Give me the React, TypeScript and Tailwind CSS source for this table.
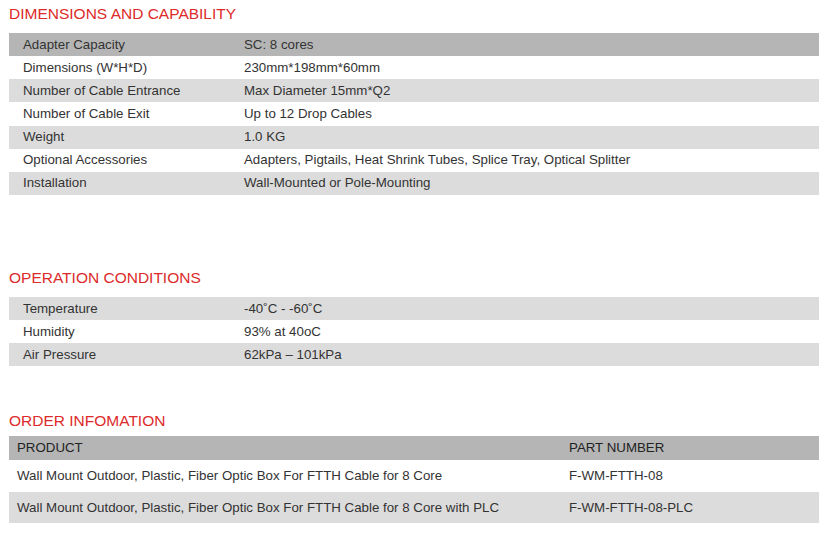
import React from "react";

const dims: [string, string][] = [
  ["Adapter Capacity", "SC: 8 cores"],
  ["Dimensions (W*H*D)", "230mm*198mm*60mm"],
  ["Number of Cable Entrance", "Max Diameter 15mm*Q2"],
  ["Number of Cable Exit", "Up to 12 Drop Cables"],
  ["Weight", "1.0 KG"],
  ["Optional Accessories", "Adapters, Pigtails, Heat Shrink Tubes, Splice Tray, Optical Splitter"],
  ["Installation", "Wall-Mounted or Pole-Mounting"],
];

const ops: [string, string][] = [
  ["Temperature", "-40˚C - -60˚C"],
  ["Humidity", "93% at 40oC"],
  ["Air Pressure", "62kPa – 101kPa"],
];

function Title({ children }: { children: React.ReactNode }) {
  return <div className="text-[15.5px] leading-[20px] text-[#dd2a2a]">{children}</div>;
}

export default function App() {
  return (
    <div
      className="w-[831px] h-[533px] bg-white text-[#333] text-[13.3px] overflow-hidden"
      style={{ fontFamily: '"Liberation Sans", Arial, sans-serif' }}
    >
      <div className="pl-[9px] pr-[12px] pt-[4px]">
        <Title>DIMENSIONS AND CAPABILITY</Title>
        <div className="mt-[9px]">
          {dims.map(([k, v], i) => (
            <div
              key={k}
              className={`flex h-[23.15px] items-center ${i === 0 ? "bg-[#b5b5b5]" : i % 2 === 0 ? "bg-[#dcdcdc]" : "bg-white"}`}
            >
              <div className="w-[235px] pl-[14px]">{k}</div>
              <div>{v}</div>
            </div>
          ))}
        </div>

        <div className="mt-[73px]">
          <Title>OPERATION CONDITIONS</Title>
        </div>
        <div className="mt-[9px]">
          {ops.map(([k, v], i) => (
            <div
              key={i}
              className={`flex h-[23px] items-center ${i % 2 === 0 ? "bg-[#dcdcdc]" : "bg-white"}`}
            >
              <div className="w-[235px] pl-[14px]">{k}</div>
              <div>{v}</div>
            </div>
          ))}
        </div>

        <div className="mt-[45px]">
          <Title>ORDER INFOMATION</Title>
        </div>
        <div className="mt-[5px]">
          <div className="flex h-[24px] items-center bg-[#b5b5b5] text-[#222]">
            <div className="w-[560px] pl-[8px]">PRODUCT</div>
            <div>PART NUMBER</div>
          </div>
          <div className="flex h-[32px] items-center bg-white">
            <div className="w-[560px] pl-[8px]">Wall Mount Outdoor, Plastic, Fiber Optic Box For FTTH Cable for 8 Core</div>
            <div>F-WM-FTTH-08</div>
          </div>
          <div className="flex h-[31px] items-center bg-[#dcdcdc]">
            <div className="w-[560px] pl-[8px]">Wall Mount Outdoor, Plastic, Fiber Optic Box For FTTH Cable for 8 Core with PLC</div>
            <div>F-WM-FTTH-08-PLC</div>
          </div>
        </div>
      </div>
    </div>
  );
}
